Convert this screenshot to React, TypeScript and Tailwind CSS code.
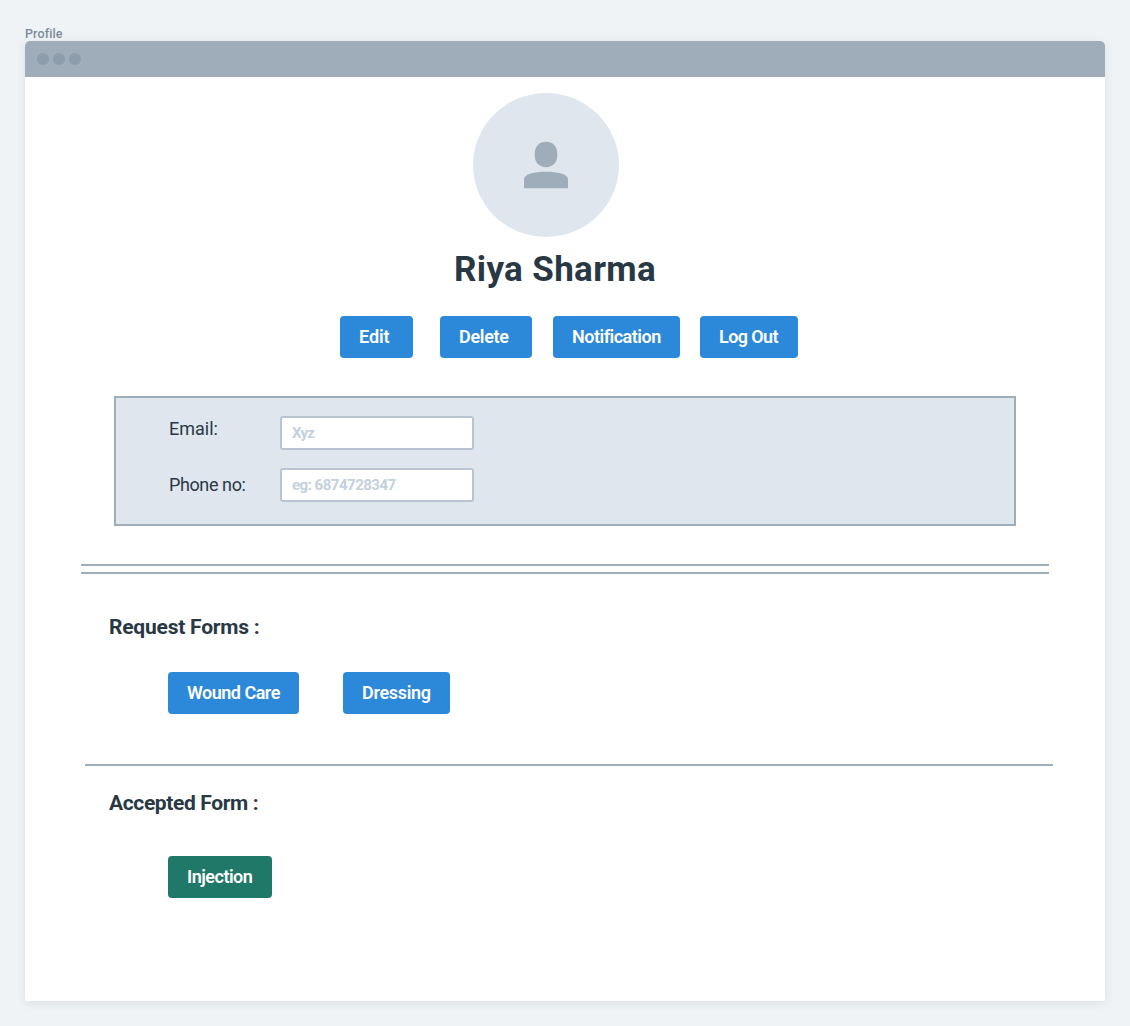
import type { ReactNode } from 'react';

function Button({ children, className }: { children: ReactNode; className: string }) {
  return (
    <button
      className={`flex h-[42px] items-center rounded pl-[19px] text-[18px] leading-none font-semibold whitespace-nowrap text-white ${className}`}
    >
      {children}
    </button>
  );
}

function Field({ label, placeholder, labelClass, inputClass }: { label: string; placeholder: string; labelClass: string; inputClass: string }) {
  return (
    <div className="flex h-[34px]">
      <label className={`w-[111px] text-[18px] leading-6 whitespace-nowrap ${labelClass}`}>{label}</label>
      <input
        placeholder={placeholder}
        className={`h-[34px] w-[194px] rounded-[3px] border-2 border-[#b8c4d1] bg-white px-[10px] text-[15px] font-bold outline-none placeholder:text-[#c5d1dc] ${inputClass}`}
      />
    </div>
  );
}

function Avatar() {
  return (
    <div className="ml-[448px] flex h-[144px] w-[146px] items-center justify-center rounded-[50%] bg-[#dfe6ee]">
      <svg width="44" height="48" viewBox="0 0 44 48" fill="#9eadb9">
        <path d="M22 .8C28.7.8 33.300 5.500 33.300 12.500V14.500C33.300 21.500 28.700 26.200 22 26.200S10.700 21.500 10.700 14.500V12.500C10.700 5.500 15.300.8 22 .8Z" />
        <path d="M0 47.200V38.500C0 32.800 10.500 30.700 22 30.700S44 32.800 44 38.500V47.200Z" />
      </svg>
    </div>
  );
}

export default function App() {
  return (
    <div className="h-[1026px] w-[1130px] bg-[#eff3f6] px-[25px] pt-[26px] font-['Roboto',sans-serif] text-[#293845]">
      <div className="h-[15px] text-[12.5px] leading-[15px] font-medium tracking-[0.1px] text-[#7b8b99]">Profile</div>
      <main className="h-[960px] overflow-hidden rounded-t-[5px] rounded-b-[1px] bg-white shadow-[0_2px_10px_rgba(41,56,69,0.10)]">
        <header className="flex h-9 items-center gap-1 bg-[#9eadb9] pl-3">
          <span className="size-3 rounded-full bg-[#8e9dac]" />
          <span className="size-3 rounded-full bg-[#8e9dac]" />
          <span className="size-3 rounded-full bg-[#8e9dac]" />
        </header>

        <section className="pt-4">
          <Avatar />
          <h1 className="mt-[13px] ml-[429px] h-10 text-[35px] leading-10 font-bold tracking-[0.35px] whitespace-nowrap">Riya Sharma</h1>
          <div className="mt-[26px] ml-[315px] flex">
            <Button className="w-[73px] bg-[#2c88d9] tracking-[-0.1px]">Edit</Button>
            <Button className="ml-[27px] w-[92px] bg-[#2c88d9] tracking-[-0.3px]">Delete</Button>
            <Button className="ml-[21px] w-[127px] bg-[#2c88d9] tracking-[-0.5px]">Notification</Button>
            <Button className="ml-5 w-[98px] bg-[#2c88d9] tracking-[-0.6px]">Log Out</Button>
          </div>
        </section>

        <section className="mt-[38px] ml-[89px] flex h-[130px] w-[902px] flex-col gap-[18px] border-2 border-[#9eadb9] bg-[#dfe6ee] pt-[18px] pl-[53px]">
          <Field label="Email:" placeholder="Xyz" labelClass="pt-px" inputClass="tracking-[-0.8px]" />
          <Field label="Phone no:" placeholder="eg: 6874728347" labelClass="pt-[5px] tracking-[-0.4px]" inputClass="tracking-[-0.5px]" />
        </section>

        <div className="mt-[38px] ml-14 h-[10px] w-[968px] border-y-2 border-[#9eadb9]" />

        <section className="h-[190px] pt-[39px]">
          <h2 className="ml-[84px] h-7 text-[21px] leading-7 font-bold tracking-[-0.22px] whitespace-nowrap">Request Forms :</h2>
          <div className="mt-[31px] ml-[143px] flex gap-11">
            <Button className="w-[131px] bg-[#2c88d9] tracking-[-0.5px]">Wound Care</Button>
            <Button className="w-[107px] bg-[#2c88d9] tracking-[-0.3px]">Dressing</Button>
          </div>
        </section>

        <hr className="ml-[60px] w-[968px] border-t-2 border-[#9eadb9]" />

        <section className="pt-[23px]">
          <h2 className="ml-[84px] h-7 text-[21px] leading-7 font-bold tracking-[-0.37px] whitespace-nowrap">Accepted Form :</h2>
          <Button className="mt-[39px] ml-[143px] w-[104px] bg-[#207868] tracking-[-0.5px]">Injection</Button>
        </section>
      </main>
    </div>
  );
}
